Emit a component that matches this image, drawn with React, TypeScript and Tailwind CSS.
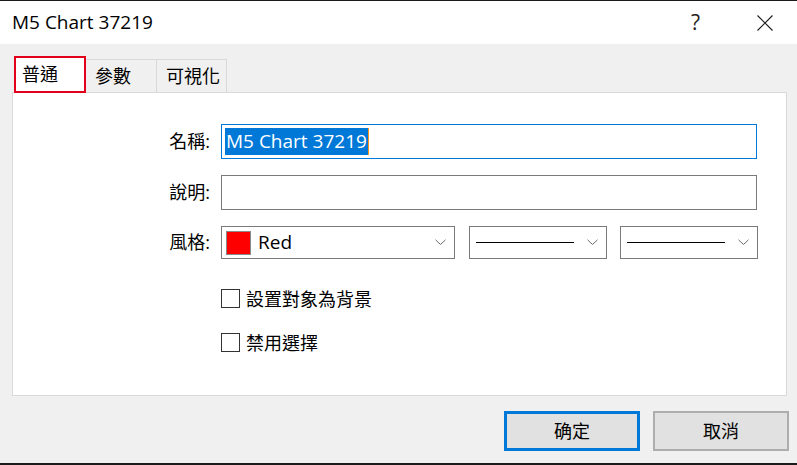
const font = "font-['Open_Sans','Noto_Sans_CJK_TC',sans-serif]";

function Chevron() {
  return (
    <svg width="11" height="7" viewBox="0 0 11 7" className="shrink-0">
      <polyline points="0.5,0.8 5.5,5.5 10.5,0.8" fill="none" stroke="#6b6b6b" strokeWidth="1" />
    </svg>
  );
}

function CloseIcon() {
  return (
    <svg width="16" height="16" viewBox="0 0 16 16" className="mr-[24px] shrink-0">
      <path d="M0.5 0.5 L15.5 15.5 M15.5 0.5 L0.5 15.5" stroke="#1a1a1a" strokeWidth="1.1" fill="none" />
    </svg>
  );
}

function LineCombo() {
  return (
    <div className="flex h-[33px] w-[138px] items-center border border-[#7a7a7a] bg-white pl-[6px] pr-[8px]">
      <div className="h-px w-[98px] bg-black" />
      <div className="flex-1" />
      <Chevron />
    </div>
  );
}

function Check({ label }: { label: string }) {
  return (
    <label className="flex items-center gap-[6px]">
      <span className="h-[19px] w-[19px] border border-[#333] bg-white" />
      <span className="text-[18px] leading-none text-black">{label}</span>
    </label>
  );
}

export default function App() {
  return (
    <div className={`${font} flex h-[465px] w-[797px] flex-col overflow-hidden bg-[#f0f0f0] text-black`}>
      {/* title bar */}
      <div className="h-px bg-[#1b1b1b]" />
      <div className="flex h-[43px] items-center bg-white">
        <span className="pl-[12px] text-[19px]">M5 Chart 37219</span>
        <div className="flex-1" />
        <span className="mr-[57px] text-[21px] leading-none text-[#222]">?</span>
        <CloseIcon />
      </div>

      {/* tabs */}
      <div className="flex h-[48px] items-end pl-[14px]">
        <div className="z-10 mb-[-1px] flex h-[37px] w-[72px] items-center border-2 border-[#e3001b] bg-white pl-[6px] text-[18px]">
          普通
        </div>
        <div className="flex h-[33px] w-[71px] items-center border-t border-r border-[#d9d9d9] pl-[9px] text-[18px]">
          參數
        </div>
        <div className="flex h-[33px] w-[70px] items-center border-t border-r border-[#d9d9d9] pl-[9px] text-[18px]">
          可視化
        </div>
      </div>

      {/* panel */}
      <div className="ml-[12px] flex h-[304px] w-[775px] flex-col border border-[#d9d9d9] bg-white pt-[31px]">
        <div className="flex items-center">
          <span className="w-[197px] text-right text-[18px]">名稱:</span>
          <div className="ml-[11px] flex h-[35px] w-[536px] items-center border border-[#0078d7] pl-[3px]">
            <span className="relative bg-[#0078d7] px-px text-[19px] leading-[27px] text-white">
              M5 Chart 37219
              <span className="absolute right-[-1px] top-0 h-[27px] w-px bg-[#f7941d]" />
            </span>
          </div>
        </div>

        <div className="mt-[16px] flex items-center">
          <span className="w-[197px] text-right text-[18px]">說明:</span>
          <div className="ml-[11px] h-[35px] w-[536px] border border-[#7a7a7a]" />
        </div>

        <div className="mt-[16px] flex items-center">
          <span className="w-[197px] text-right text-[18px]">風格:</span>
          <div className="ml-[11px] flex h-[33px] w-[234px] items-center border border-[#7a7a7a] pl-[4px] pr-[8px]">
            <span className="h-[24px] w-[25px] border border-[#8a8a8a] bg-[#ff0000]" />
            <span className="ml-[7px] text-[19px]">Red</span>
            <div className="flex-1" />
            <Chevron />
          </div>
          <div className="ml-[14px]">
            <LineCombo />
          </div>
          <div className="ml-[13px]">
            <LineCombo />
          </div>
        </div>

        <div className="ml-[208px] mt-[30px] flex flex-col gap-[25px]">
          <Check label="設置對象為背景" />
          <Check label="禁用選擇" />
        </div>
      </div>

      {/* buttons */}
      <div className="mt-[15px] flex justify-end gap-[13px] pr-[8px]">
        <button className="flex h-[40px] w-[136px] items-center justify-center border-[3px] border-[#0078d7] bg-[#e1e1e1] text-[18px]">
          确定
        </button>
        <button className="flex h-[40px] w-[136px] items-center justify-center border-2 border-[#adadad] bg-[#e1e1e1] text-[18px]">
          取消
        </button>
      </div>

      <div className="flex-1" />
      <div className="h-[2px] bg-[#1b1b1b]" />
    </div>
  );
}
